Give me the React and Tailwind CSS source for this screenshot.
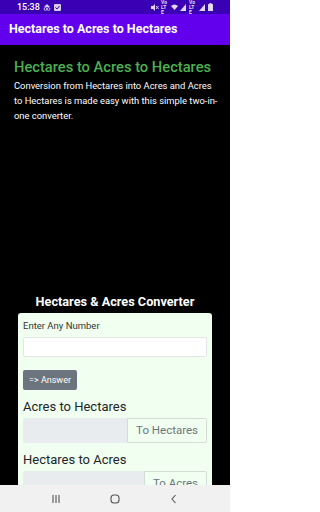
import React from "react";

function StatusBar() {
  return (
    <div className="h-[14px] bg-[#3a00b4] flex items-center justify-between px-[17px] text-white shrink-0">
      <div className="flex items-center gap-[3px]">
        <span className="text-[9px] leading-none font-medium">15:38</span>
        <svg width="8" height="8" viewBox="0 0 8 8" className="opacity-80">
          <path d="M1 4 L4 1 L7 4 Z" fill="white" />
          <circle cx="2.5" cy="6" r="1.4" fill="none" stroke="white" strokeWidth="0.9" />
          <circle cx="5.5" cy="6" r="1.4" fill="none" stroke="white" strokeWidth="0.9" />
        </svg>
        <svg width="7" height="7" viewBox="0 0 7 7" className="opacity-80">
          <rect x="0" y="0" width="7" height="7" rx="1" fill="white" />
          <path d="M1.5 3.5 L3 5 L5.5 2" stroke="#3a00b4" strokeWidth="1" fill="none" />
        </svg>
      </div>
      <div className="flex items-center gap-[2px] opacity-85">
        <svg width="8" height="7" viewBox="0 0 8 7">
          <path d="M0 2 H2 L4 0 V7 L2 5 H0 Z" fill="white" />
          <path d="M5 2 L7.5 5 M7.5 2 L5 5" stroke="white" strokeWidth="0.9" />
        </svg>
        <span className="text-[5px] leading-[5px] font-bold w-[8px] break-all">VoLTE</span>
        <svg width="7" height="6" viewBox="0 0 7 6">
          <path d="M0 2 Q3.5 -1 7 2 L3.5 6 Z" fill="white" />
        </svg>
        <svg width="7" height="7" viewBox="0 0 7 7">
          <path d="M6 0 V7 H0 Z" fill="white" />
        </svg>
        <span className="text-[5px] leading-[5px] font-bold w-[8px] break-all">VoLTE</span>
        <svg width="7" height="7" viewBox="0 0 7 7">
          <path d="M6 0 V7 H0 Z" fill="white" />
        </svg>
        <svg width="5" height="8" viewBox="0 0 5 8">
          <rect x="1.5" y="0" width="2" height="1" fill="white" />
          <rect x="0" y="1" width="5" height="7" rx="0.5" fill="white" />
        </svg>
      </div>
    </div>
  );
}

function NavBar() {
  return (
    <div className="h-[27px] bg-[#f1f1f1] flex items-center justify-around px-[26px] shrink-0">
      <svg width="10" height="10" viewBox="0 0 10 10">
        <path d="M2 1 V9 M5 1 V9 M8 1 V9" stroke="#555" strokeWidth="1.1" />
      </svg>
      <svg width="10" height="10" viewBox="0 0 10 10">
        <rect x="1" y="1" width="8" height="8" rx="3" fill="none" stroke="#555" strokeWidth="1.1" />
      </svg>
      <svg width="10" height="10" viewBox="0 0 10 10">
        <path d="M6.5 1 L3 5 L6.5 9" fill="none" stroke="#555" strokeWidth="1.1" />
      </svg>
    </div>
  );
}

export default function App() {
  return (
    <div
      className="w-[230px] h-[512px] flex flex-col overflow-hidden bg-black"
      style={{ fontFamily: "Roboto, 'Liberation Sans', sans-serif" }}
    >
      <StatusBar />
      <div className="h-[31px] bg-[#6200ee] flex items-center px-[9px] shrink-0">
        <span className="text-white text-[12.5px] font-bold leading-none whitespace-nowrap">Hectares to Acres to Hectares</span>
      </div>
      <div className="flex-1 overflow-hidden">
        <div className="pl-[14px] pr-[12px] pt-[12px]">
          <h1 className="text-[#4caf50] text-[14.7px] leading-[20px] font-medium whitespace-nowrap">Hectares to Acres to Hectares</h1>
          <p className="text-white text-[9.4px] leading-[15px] mt-[1px]">
            Conversion from Hectares into Acres and Acres to Hectares is made easy with this simple two-in-one converter.
          </p>
        </div>
        <h2 className="mt-[170px] text-white text-[12.7px] leading-[18px] font-bold text-center">Hectares &amp; Acres Converter</h2>
        <div className="mt-[2px] mx-[18px] bg-[#f0fff0] rounded-[3px] px-[5px] pt-[6px] pb-[10px]">
          <label className="block text-[9.5px] leading-[13px] text-[#333]">Enter Any Number</label>
          <div className="mt-[5px] h-[20px] bg-white border border-[#e3e6e8] rounded-[2px]"></div>
          <button className="mt-[13px] h-[20px] px-[6px] bg-[#6c757d] rounded-[2px] text-white text-[9px] leading-none">=&gt; Answer</button>
          <div className="mt-[8px] text-[13px] leading-[17px] text-[#212529]">Acres to Hectares</div>
          <div className="mt-[3px] h-[25px] flex">
            <div className="flex-1 bg-[#e9ecef] rounded-l-[2px]"></div>
            <div className="px-[8px] flex items-center border border-[#d5dcd5] rounded-r-[2px] text-[11.5px] text-[#6c757d]">To Hectares</div>
          </div>
          <div className="mt-[8px] text-[13px] leading-[17px] text-[#212529]">Hectares to Acres</div>
          <div className="mt-[3px] h-[25px] flex">
            <div className="flex-1 bg-[#e9ecef] rounded-l-[2px]"></div>
            <div className="px-[8px] flex items-center border border-[#d5dcd5] rounded-r-[2px] text-[11.5px] text-[#6c757d]">To Acres</div>
          </div>
        </div>
      </div>
      <NavBar />
    </div>
  );
}
